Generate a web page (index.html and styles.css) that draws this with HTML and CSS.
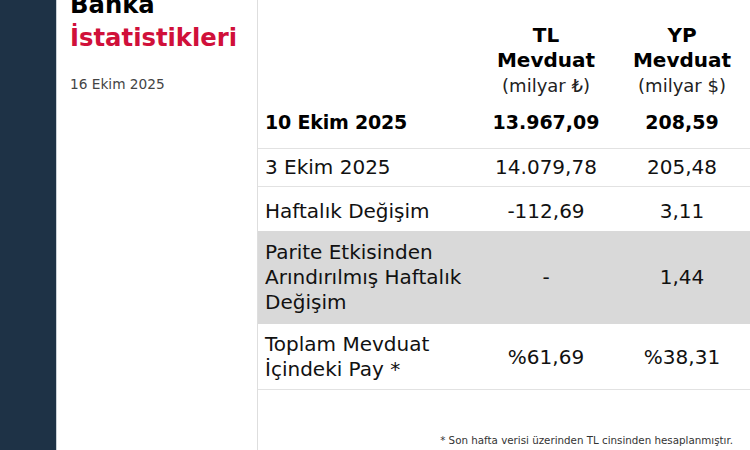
FILE: index.html
```html
<!DOCTYPE html>
<html lang="tr">
<head>
<meta charset="utf-8">
<link rel="stylesheet" href="styles.css">
</head>
<body>
<div class="page">
  <aside class="sidebar"></aside>
  <section class="intro">
    <h1 class="title"><span class="title-top">Banka</span><span class="title-red">İstatistikleri</span></h1>
    <p class="date">16 Ekim 2025</p>
  </section>
  <main class="content">
    <table class="stats">
      <colgroup>
        <col class="c-label"><col class="c-val"><col class="c-val">
      </colgroup>
      <thead>
        <tr class="head">
          <th></th>
          <th><span class="hb">TL</span><span class="hb">Mevduat</span><span class="hs">(milyar ₺)</span></th>
          <th><span class="hb">YP</span><span class="hb">Mevduat</span><span class="hs">(milyar $)</span></th>
        </tr>
      </thead>
      <tbody>
        <tr class="r-main">
          <td>10 Ekim 2025</td><td>13.967,09</td><td>208,59</td>
        </tr>
        <tr class="r-prev">
          <td>3 Ekim 2025</td><td>14.079,78</td><td>205,48</td>
        </tr>
        <tr class="r-chg">
          <td>Haftalık Değişim</td><td>-112,69</td><td>3,11</td>
        </tr>
        <tr class="r-gray">
          <td>Parite Etkisinden Arındırılmış Haftalık Değişim</td><td>-</td><td>1,44</td>
        </tr>
        <tr class="r-share">
          <td>Toplam Mevduat İçindeki Pay *</td><td>%61,69</td><td>%38,31</td>
        </tr>
      </tbody>
    </table>
    <p class="note">* Son hafta verisi üzerinden TL cinsinden hesaplanmıştır.</p>
  </main>
</div>
</body>
</html>
```
FILE: styles.css
```css
html, body {
  margin: 0;
  padding: 0;
  background: #ffffff;
}
body {
  font-family: "DejaVu Sans", sans-serif;
  color: #111;
}
.page {
  display: flex;
  width: 750px;
  height: 450px;
  overflow: hidden;
}
.sidebar {
  width: 56px;
  flex: none;
  background: #1e3246;
  border-right: 1px solid #c9d0d6;
}
.intro {
  width: 187px;
  flex: none;
  padding-left: 13px;
  border-right: 1px solid #dedede;
}
.title {
  margin: -12px 0 0 0;
  font-size: 24.3px;
  line-height: 33px;
  font-weight: bold;
}
.title-top, .title-red {
  display: block;
}
.title-top { color: #000; }
.title-red { color: #d0103a; }
.date {
  margin: 20px 0 0 0;
  font-size: 13.7px;
  line-height: 20px;
  color: #444;
}
.content {
  flex: 1;
  display: flex;
  flex-direction: column;
}
.stats {
  width: 492px;
  border-collapse: collapse;
  table-layout: fixed;
  font-size: 20px;
  line-height: 25px;
  color: #111;
}
.c-label { width: 220px; }
.c-val { width: 136px; }
.stats td, .stats th {
  padding: 0;
  text-align: center;
  vertical-align: middle;
}
.stats td:first-child {
  text-align: left;
  padding-left: 7px;
  padding-right: 8px;
}
.head th {
  padding: 23px 0 4px;
  vertical-align: top;
}
.hb {
  display: block;
  font-weight: bold;
  color: #000;
}
.hs {
  display: block;
  font-size: 18px;
  font-weight: normal;
  color: #222;
}
.r-main td {
  padding-top: 8px;
  padding-bottom: 13px;
  font-size: 19px;
  font-weight: bold;
  color: #000;
  border-bottom: 1px solid #e2e2e2;
}
.r-main td:first-child { letter-spacing: -0.2px; }
.r-prev td {
  padding-top: 6px;
  padding-bottom: 6px;
  border-bottom: 1px solid #e2e2e2;
}
.r-chg td {
  padding-top: 12px;
  padding-bottom: 7px;
}
.r-gray td {
  background: #d9d9d9;
  padding-top: 9px;
  padding-bottom: 9px;
}
.r-share td {
  padding-top: 8px;
  padding-bottom: 7px;
  border-bottom: 1px solid #e2e2e2;
}
.note {
  margin: 44px 17px 0 0;
  text-align: right;
  font-size: 10.3px;
  line-height: 12px;
  color: #333;
}
```
